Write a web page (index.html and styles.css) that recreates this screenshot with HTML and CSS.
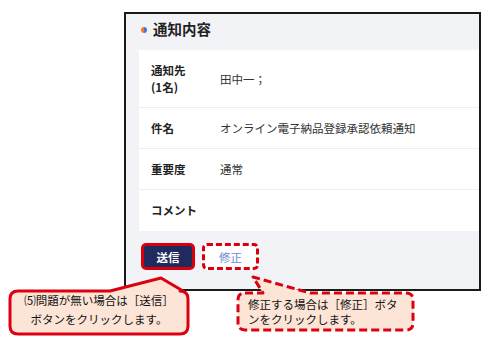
FILE: index.html
```html
<!DOCTYPE html>
<html lang="ja">
<head>
<meta charset="utf-8">
<link rel="stylesheet" href="styles.css">
</head>
<body>
<div class="page">
  <div class="frame">
    <div class="section-head"><span class="dot"></span><h2 class="section-title">通知内容</h2></div>
    <div class="card">
      <div class="row row-tall"><div class="label">通知先<br>(1名)</div><div class="value">田中一；</div></div>
      <div class="row"><div class="label">件名</div><div class="value">オンライン電子納品登録承認依頼通知</div></div>
      <div class="row"><div class="label">重要度</div><div class="value">通常</div></div>
      <div class="row row-last"><div class="label">コメント</div><div class="value"></div></div>
    </div>
    <div class="actions">
      <button class="btn btn-primary">送信</button>
      <button class="btn btn-secondary">修正</button>
    </div>
  </div>
  <svg class="annot" width="492" height="339" viewBox="0 0 492 339">
    <path class="bubble-solid" d="M18 291 H110 L161 278 L183 291 H180 Q188 291 188 299 V326 Q188 334 180 334 H18 Q10 334 10 326 V299 Q10 291 18 291 Z"/>
    <path class="bubble-dashed" d="M245 293 H263 L253 277 L310 293 H406 Q413 293 413 300 V323 Q413 330 406 330 H245 Q238 330 238 323 V300 Q238 293 245 293 Z"/>
  </svg>
  <div class="note note-send">⑸問題が無い場合は［送信］<br>ボタンをクリックします。</div>
  <div class="note note-edit">修正する場合は［修正］ボタ<br>ンをクリックします。</div>
</div>
</body>
</html>
```

FILE: styles.css
```css
* { box-sizing: border-box; }
html, body { margin: 0; padding: 0; background: #fff; }
body { font-family: "Noto Sans CJK JP", "Noto Sans", sans-serif; }
.page { position: relative; width: 492px; height: 339px; overflow: hidden; }

.frame {
  margin: 12px 0 0 124px;
  width: 357px;
  height: 279px;
  border: 2px solid #1a1a1a;
  background: #f2f3f7;
  overflow: hidden;
  display: flex;
  flex-direction: column;
}
.section-head {
  height: 36px;
  padding: 0 0 5px 15px;
  display: flex;
  align-items: center;
  gap: 6px;
}
.dot {
  width: 6px; height: 6px; border-radius: 50%;
  background: linear-gradient(90deg, #f07a30 0%, #f07a30 45%, #4f6fd6 55%, #4f6fd6 100%);
}
.section-title { margin: 0; font-size: 14.5px; font-weight: 700; color: #222; line-height: 1; }

.card { margin-left: 13px; background: #fff; }
.row {
  height: 41px;
  padding-left: 12px;
  display: flex;
  align-items: center;
  border-bottom: 1px solid #eceef2;
  font-size: 11.5px;
}
.row-tall { height: 58px; }
.row-last { border-bottom: none; height: 41px; }
.label { width: 69px; font-weight: 700; color: #222; line-height: 17px; }
.value { color: #333; }

.actions { margin-top: 12px; padding-left: 15px; display: flex; gap: 7px; }
.btn {
  height: 27px;
  border-radius: 5px;
  font-family: inherit;
  font-size: 11.5px;
  padding: 0;
  display: flex; align-items: center; justify-content: center;
}
.btn-primary {
  width: 54px;
  background: #1f2b5c;
  color: #fff;
  font-weight: 700;
  border: 3px solid #d8000f;
}
.btn-secondary {
  width: 57px;
  background: #fff;
  color: #6b89d8;
  border: 3px dashed #d8000f;
}

.annot { position: absolute; left: 0; top: 0; pointer-events: none; }
.bubble-solid { fill: #fce4d6; stroke: #dc0010; stroke-width: 3; stroke-linejoin: round; }
.bubble-dashed { fill: #fce4d6; stroke: #dc0010; stroke-width: 3; stroke-dasharray: 8 4; stroke-linejoin: round; }

.note { position: absolute; font-size: 11.5px; color: #111; white-space: nowrap; }
.note-send { left: 10px; top: 291px; width: 178px; text-align: center; line-height: 18.5px; }
.note-edit { left: 248px; top: 297px; line-height: 15px; }
```
